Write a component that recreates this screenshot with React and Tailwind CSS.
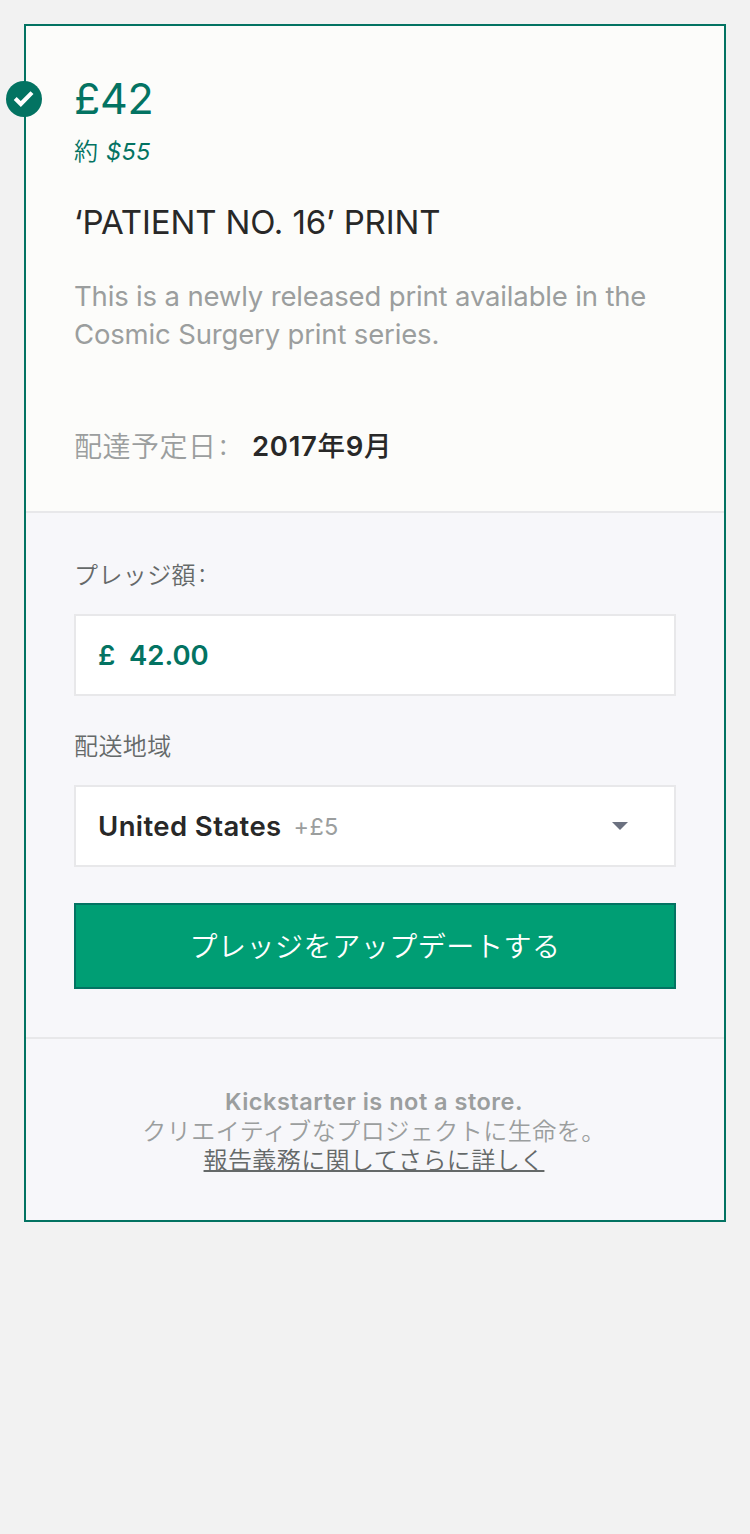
function CheckBadge() {
  return (
    <svg
      className="absolute -left-[20px] top-[55px] h-9 w-9"
      viewBox="0 0 36 36"
      fill="none"
    >
      <circle cx="18" cy="18" r="18" fill="#037362" />
      <path d="M9.2 17.6 L14.8 23 L26 11.6" stroke="#fff" strokeWidth="4.2" />
    </svg>
  );
}

function RewardSummary() {
  return (
    <section className="flex h-[487px] flex-col border-b-2 border-[#e8e8ea] bg-[#fcfcfa] px-12 pt-[47px]">
      <p className="h-[52px] text-[43px] leading-[50px] tracking-[-0.3px] text-[#037362]">£42</p>
      <p className="mt-2 flex h-9 items-center text-2xl leading-9 text-[#037362]">
        <span className="-mt-[2px] font-['Noto_Sans_CJK_JP',sans-serif] font-[350]">約</span>
        <em className="ml-2 mt-[2px] text-[23.5px] tracking-[0.4px]">$55</em>
      </p>
      <h2 className="mt-[31px] h-11 whitespace-nowrap text-[33px] leading-[44px] tracking-[-0.13px] text-[#282828]">
        ‘PATIENT NO. 16’ PRINT
      </h2>
      <p className="mt-[33px] whitespace-nowrap text-[27.5px] leading-[38px] tracking-[-0.16px] text-[#9b9e9e]">
        This is a newly released print available in the
        <br />
        Cosmic Surgery print series.
      </p>
      <p className="mt-[72px] flex h-10 items-center whitespace-nowrap leading-10">
        <span className="w-[178px] font-['Noto_Sans_CJK_JP',sans-serif] text-[28px] font-[350] tracking-[0.5px] text-[#9b9e9e]">
          配達予定日<span className="relative -top-[2px] ml-[3px]">:</span>
        </span>
        <strong className="mt-[2px] font-['Inter','Noto_Sans_CJK_JP',sans-serif] text-[27.5px] font-semibold tracking-[0.7px] text-[#282828]">
          2017<span className="font-medium">年</span>9<span className="font-medium">月</span>
        </strong>
      </p>
    </section>
  );
}

function PledgeForm() {
  return (
    <section className="flex h-[526px] flex-col border-b-2 border-[#e8e8ea] px-12 pt-[43px]">
      <label className="h-9 font-['Noto_Sans_CJK_JP',sans-serif] text-2xl font-[350] leading-9 tracking-[0.4px] text-[#656969]">
        プレッジ額<span className="relative -top-[2px] ml-[3px]">:</span>
      </label>
      <div className="mt-[22px] flex h-[82px] items-center border-2 border-[#e8e8ea] bg-white px-[22px] pt-[2px] text-[27.5px] font-semibold text-[#037362]">
        <span className="w-[31px]">£</span>
        <span>42.00</span>
      </div>
      <label className="mt-[31px] h-9 font-['Noto_Sans_CJK_JP',sans-serif] text-2xl font-[350] leading-9 tracking-[0.4px] text-[#656969]">
        配送地域
      </label>
      <div className="mt-[22px] flex h-[82px] items-center border-2 border-[#e8e8ea] bg-white pl-[22px] pr-[46px]">
        <span className="mt-[2px] text-[27.5px] font-semibold tracking-[0.4px] text-[#282828]">United States</span>
        <span className="ml-3 mt-[2px] text-[23.5px] tracking-[0.3px] text-[#9b9e9e]">+£5</span>
        <svg className="ml-auto h-2 w-4" viewBox="0 0 16 8">
          <path d="M0 0H16L8 8Z" fill="#6b7180" />
        </svg>
      </div>
      <button className="mt-9 flex h-[86px] items-center justify-center border-2 border-[#037362] bg-[#009e74] pb-[2px] font-['Noto_Sans_CJK_JP',sans-serif] text-[28px] font-[350] tracking-[0.55px] text-white">
        プレッジをアップデートする
      </button>
    </section>
  );
}

function StoreNotice() {
  return (
    <footer className="flex h-[181px] flex-col items-center pr-[2px] pt-12 text-2xl leading-[29px] text-[#9b9e9e]">
      <strong className="h-7 text-[23.5px] font-semibold tracking-[0.5px]">Kickstarter is not a store.</strong>
      <span className="font-['Noto_Sans_CJK_JP',sans-serif] font-[350] tracking-[0.5px]">
        クリエイティブなプロジェクトに生命を。
      </span>
      <a className="font-['Noto_Sans_CJK_JP',sans-serif] font-[350] tracking-[0.4px] text-[#656969] underline decoration-2 underline-offset-1 [text-decoration-skip-ink:none]">
        報告義務に関してさらに詳しく
      </a>
    </footer>
  );
}

export default function App() {
  return (
    <main lang="ja" className="min-h-screen bg-[#f2f2f2] p-6 font-['Inter','Noto_Sans_CJK_JP',sans-serif]">
      <article className="relative h-[1198px] border-2 border-[#037362] bg-[#f7f7fa]">
        <CheckBadge />
        <RewardSummary />
        <PledgeForm />
        <StoreNotice />
      </article>
    </main>
  );
}
